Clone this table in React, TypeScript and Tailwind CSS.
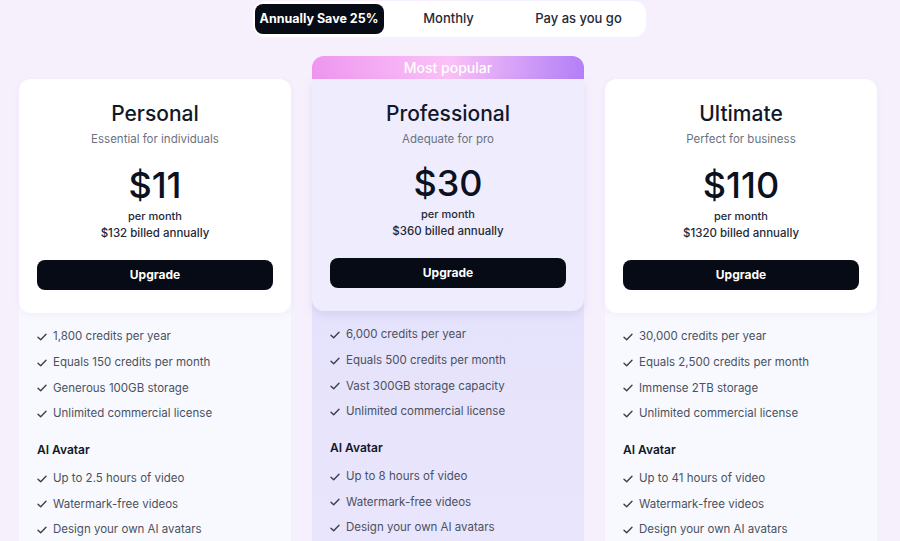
import React from "react";

type Plan = {
  name: string;
  tagline: string;
  price: string;
  billed: string;
  features: string[];
  avatar: string[];
  popular?: boolean;
};

const plans: Plan[] = [
  {
    name: "Personal",
    tagline: "Essential for individuals",
    price: "$11",
    billed: "$132 billed annually",
    features: [
      "1,800 credits per year",
      "Equals 150 credits per month",
      "Generous 100GB storage",
      "Unlimited commercial license",
    ],
    avatar: [
      "Up to 2.5 hours of video",
      "Watermark-free videos",
      "Design your own AI avatars",
    ],
  },
  {
    name: "Professional",
    tagline: "Adequate for pro",
    price: "$30",
    billed: "$360 billed annually",
    features: [
      "6,000 credits per year",
      "Equals 500 credits per month",
      "Vast 300GB storage capacity",
      "Unlimited commercial license",
    ],
    avatar: [
      "Up to 8 hours of video",
      "Watermark-free videos",
      "Design your own AI avatars",
    ],
    popular: true,
  },
  {
    name: "Ultimate",
    tagline: "Perfect for business",
    price: "$110",
    billed: "$1320 billed annually",
    features: [
      "30,000 credits per year",
      "Equals 2,500 credits per month",
      "Immense 2TB storage",
      "Unlimited commercial license",
    ],
    avatar: [
      "Up to 41 hours of video",
      "Watermark-free videos",
      "Design your own AI avatars",
    ],
  },
];

const Check = () => (
  <svg width="10" height="8" viewBox="0 0 10 8" fill="none" className="shrink-0">
    <path d="M1 4.2L3.7 6.8L9 1.2" stroke="#374151" strokeWidth="1.4" strokeLinecap="round" strokeLinejoin="round" />
  </svg>
);

const FeatureRow = ({ text }: { text: string }) => (
  <div className="flex items-center gap-[6px] h-[25.7px] text-[11.5px] text-[#4b5161]">
    <Check />
    <span>{text}</span>
  </div>
);

const PlanColumn = ({ plan }: { plan: Plan }) => (
  <div
    className={
      plan.popular
        ? "w-[272px] flex flex-col rounded-t-xl bg-gradient-to-b from-[#e1e1fb] to-[#e9e5fc]"
        : "w-[272px] flex flex-col mt-[23px] rounded-t-xl bg-[#f8f9fe]"
    }
  >
    {plan.popular && (
      <div className="h-[23px] rounded-t-xl bg-gradient-to-r from-[#ee96ef] via-[#fbc1f7] to-[#b37ff6] flex items-center justify-center text-white text-[14px] font-medium">
        Most popular
      </div>
    )}
    <div
      className={
        plan.popular
          ? "h-[232px] rounded-b-xl bg-[#efedfd] shadow-[0_4px_10px_rgba(120,110,200,0.15)] flex flex-col items-center pt-[21px] px-[18px]"
          : "h-[234px] rounded-xl bg-white shadow-[0_2px_6px_rgba(120,110,200,0.08)] flex flex-col items-center pt-[21px] px-[18px]"
      }
    >
      <div className="text-[21px] font-medium text-[#111827] leading-[28px]">{plan.name}</div>
      <div className="text-[11.5px] text-[#6b7280] mt-[3px]">{plan.tagline}</div>
      <div
        className={
          plan.popular
            ? "text-[36px] font-medium text-[#0b1120] leading-[44px] mt-[13px]"
            : "text-[36px] font-medium text-[#0b1120] leading-[44px] mt-[15px]"
        }
      >
        {plan.price}
      </div>
      <div className="text-[11px] font-medium text-[#1f2937] mt-[1px] leading-[16px]">per month</div>
      <div className="text-[11.5px] font-medium text-[#1f2937] leading-[19px]">{plan.billed}</div>
      <button className="mt-[17px] w-full h-[30px] rounded-lg bg-[#060b16] text-white text-[12px] font-bold">
        Upgrade
      </button>
    </div>
    <div className="px-[18px] pt-[11px] pb-4">
      {plan.features.map((f) => (
        <FeatureRow key={f} text={f} />
      ))}
      <div className="text-[12px] font-semibold text-[#111827] mt-[12px] mb-[5px] h-[22px] flex items-center">
        AI Avatar
      </div>
      {plan.avatar.map((f) => (
        <FeatureRow key={f} text={f} />
      ))}
    </div>
  </div>
);

export default function App() {
  return (
    <div
      className="w-[900px] h-[541px] overflow-hidden bg-[#f6f0fd] flex flex-col"
      style={{ fontFamily: "Inter, 'Noto Sans', sans-serif" }}
    >
      <div className="flex justify-center mt-[1px]">
        <div className="ml-[-2px] w-[393px] h-[36px] bg-white rounded-xl flex items-center px-[2px] text-[13px] text-[#1f2937] font-medium">
          <div className="w-[129px] h-[30px] rounded-lg bg-[#060b16] text-white text-[12.5px] font-bold flex items-center justify-center">
            Annually Save 25%
          </div>
          <div className="w-[130px] flex justify-center">Monthly</div>
          <div className="w-[130px] flex justify-center">Pay as you go</div>
        </div>
      </div>
      <div className="flex gap-[21px] pl-[19px] mt-[19px]">
        {plans.map((p) => (
          <PlanColumn key={p.name} plan={p} />
        ))}
      </div>
    </div>
  );
}
